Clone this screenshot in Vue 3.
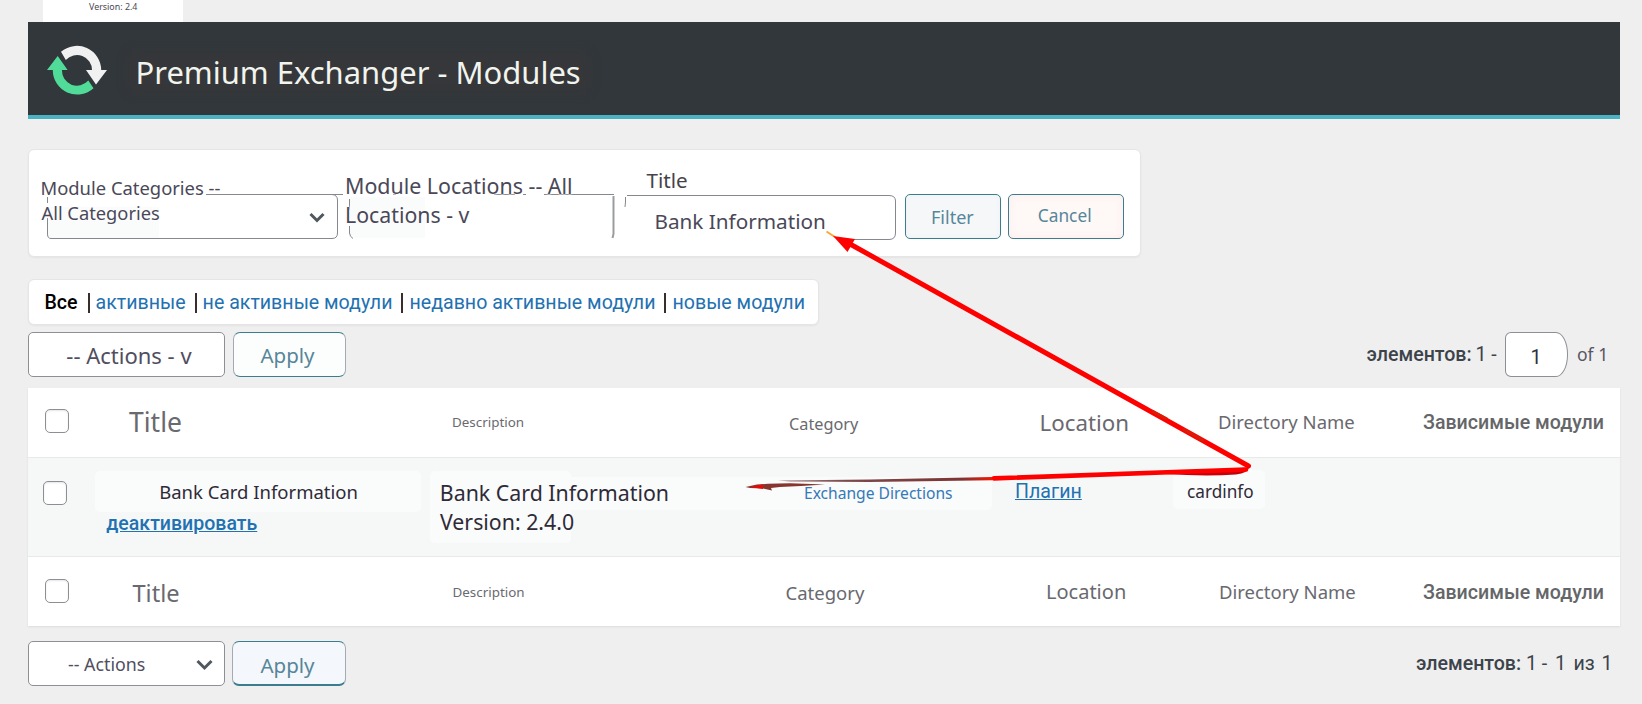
<script setup>
const filters = ['активные', 'не активные модули', 'недавно активные модули', 'новые модули']
const columns = [
  { key: 'title', label: 'Title' },
  { key: 'desc', label: 'Description' },
  { key: 'cat', label: 'Category' },
  { key: 'loc', label: 'Location' },
  { key: 'dir', label: 'Directory Name' },
  { key: 'dep', label: 'Зависимые модули' },
]
</script>

<template>
  <div class="page">
    <div class="version-chip"><span>Version: 2.4</span></div>

    <header class="banner">
      <svg class="logo" width="62" height="52" viewBox="0 0 62 52">
        <path fill="#f1f1f2" d="M14 6.8A24.3 24.3 0 0 1 54.2 25H60L49 39.5L39 25H45A15 15 0 0 0 18.8 15Z" />
        <path fill="#50dc98" d="M10.7 11L20.6 25H15A15 15 0 0 0 41.3 35.6L46.5 43.2A24.3 24.3 0 0 1 5.8 25H0Z" />
      </svg>
      <h1 class="t">Premium Exchanger - Modules</h1>
    </header>

    <form class="card filter" @submit.prevent>
      <div class="field f-cat">
        <svg class="frame" width="316" height="106" viewBox="0 0 316 106">
          <path class="tint" d="M19 57H130V88H22Q18 88 18 84Z" />
          <path d="M177 44.5H314M303 44.5Q308.500 45 308.500 50V83Q308.500 88.500 303 88.500H22Q18.500 88.500 18.500 84V68M18.500 47V53M60 44.500H63" />
          <path class="chev" d="M281.500 64L288 70.500L294.500 64" />
        </svg>
        <span class="t line1">Module Categories --</span>
        <span class="t line2">All Categories</span>
      </div>
      <div class="field f-loc">
        <svg class="frame" width="274" height="106" viewBox="0 0 274 106">
          <path class="tint" d="M5 47H80V88H8Q4 88 4 84Z" />
          <path d="M4.500 49V60M4.500 76V83Q5 87 8 88.500M48 44.500H51M149 44.500H170M178 44.500H181M199 44.500H269" />
          <path class="thick" d="M268.500 46V84L267.500 88" />
        </svg>
        <span class="t line1">Module Locations -- All</span>
        <span class="t line2">Locations - v</span>
      </div>
      <div class="field f-title">
        <svg class="frame" width="286" height="106" viewBox="0 0 286 106">
          <path d="M8 45.500H270Q276.500 45.500 276.500 51V83Q276.500 89.500 270 89.500H232M6.500 47V52L6 57" />
        </svg>
        <span class="t line1">Title</span>
        <span class="t line2">Bank Information</span>
      </div>
      <button class="btn b-filter"><span class="t">Filter</span></button>
      <button class="btn b-cancel"><span class="t">Cancel</span></button>
    </form>

    <nav class="card links">
      <b>Все</b>
      <template v-for="f in filters" :key="f"><i></i><a>{{ f }}</a></template>
    </nav>

    <div class="bar top">
      <div class="select"><span class="t">-- Actions - v</span></div>
      <button class="btn apply"><span class="t">Apply</span></button>
      <div class="pager">
        <b>элементов:</b><span class="from">1 -</span>
        <span class="num"><span>1</span></span>
        <span class="t of">of 1</span>
      </div>
    </div>

    <section class="table">
      <div class="row head">
        <div><span class="check"></span></div>
        <div v-for="c in columns" :key="c.key"><span class="t" :class="c.key">{{ c.label }}</span></div>
      </div>
      <div class="row data">
        <div><span class="check"></span></div>
        <div><em class="pad p1"></em><span class="t title">Bank Card Information</span><a class="t off">деактивировать</a></div>
        <div><em class="pad p2"></em><em class="pad p3"></em><span class="t desc">Bank Card Information</span><span class="t ver">Version: 2.4.0</span></div>
        <div><span class="t cat">Exchange Directions</span></div>
        <div><a class="t loc">Плагин</a></div>
        <div><em class="pad p4"></em><span class="t dir">cardinfo</span></div>
        <div></div>
      </div>
      <div class="row foot">
        <div><span class="check"></span></div>
        <div v-for="c in columns" :key="c.key"><span class="t" :class="c.key">{{ c.label }}</span></div>
      </div>
    </section>

    <div class="bar bottom">
      <div class="select">
        <span class="t">-- Actions</span>
        <svg class="arrow" width="18" height="12" viewBox="0 0 18 12"><path d="M1.500 2L8.500 9L15.500 2" /></svg>
      </div>
      <button class="btn apply"><span class="t">Apply</span></button>
      <div class="pager">
        <b>элементов:</b><span class="from">1 -</span><span class="n1">1</span><span class="n2">из</span><span class="n3">1</span>
      </div>
    </div>

    <svg class="callout" width="1642" height="704" viewBox="0 0 1642 704">
      <defs>
        <linearGradient id="fade" gradientUnits="userSpaceOnUse" x1="784" y1="0" x2="992" y2="0">
          <stop offset="0" stop-color="#a58588" /><stop offset=".3" stop-color="#7d4a4a" /><stop offset=".85" stop-color="#7d3433" /><stop offset="1" stop-color="#f01800" />
        </linearGradient>
      </defs>
      <path d="M826.500 231.500L835 237" stroke="#ffa630" stroke-width="2" />
      <path d="M850 244L1248.500 466" stroke="#fe0000" stroke-width="5" stroke-linecap="round" />
      <path d="M833 236L855 239L847.500 252Z" fill="#fe0000" />
      <path d="M1152 411L1167 419M1183 429L1204 441" stroke="#d81d08" stroke-width="3" />
      <path d="M1165 472L1249 467.500Q1248 473 1236 474.500Q1205 476.500 1165 474Z" fill="#c90009" />
      <path d="M994 478.400L1246 469.500" stroke="#fe0000" stroke-width="4.600" stroke-linecap="round" />
      <path d="M778 480.500L870 479.500L992 477V480.200L870 482L790 481.500Z" fill="url(#fade)" />
      <path d="M745.500 487L757 484.500L768 483.800L790 483.300L825 484.500L801 486L780 487L771 488L772 490.500L763 488.500L750 488Z" fill="#86352f" />
      <path d="M750 487L763 484.500V489Z" fill="#ed0905" />
    </svg>
  </div>
</template>

<style>
body { background: #efefef; overflow: hidden; }
</style>

<style scoped>
* { box-sizing: border-box; }
.page { position: relative; width: 1642px; height: 704px; padding-left: 28px; background: #efefef; overflow: hidden; font-family: Roboto, "Noto Sans", sans-serif; font-size: 19.6px; color: #3c434a; }
.t { --r: .388; display: block; width: max-content; font-family: "Noto Sans", sans-serif; font-size: var(--f); font-weight: 400; line-height: 24px; white-space: nowrap; margin: calc(var(--b) - 12px - var(--f) * var(--r)) 0 0 var(--x); }

.version-chip { width: 140px; height: 22px; margin-left: 15px; background: #fff; font: 8.9px/14px "Noto Sans", sans-serif; color: #4a4850; padding-left: 46px; overflow: hidden; }
.banner { width: 1592px; height: 97px; background: #32373b; border-bottom: 4px solid #4bb2c1; display: flex; }
.logo { margin: 23px 0 0 19px; flex: none; }
.banner .t { --f: 30.950px; --b: 62px; --x: 26.500px; color: #f2f4ee; background: #36373a; box-shadow: 0 0 8px 8px #36373a; height: 24px; }

.card { background: #fff; border: 1px solid #e5e5e5; border-radius: 6px; box-shadow: 0 1px 2px rgba(0, 0, 0, .05); }
.filter { width: 1113px; height: 108px; margin-top: 30px; display: flex; }
.field { position: relative; height: 106px; flex: none; color: #4a4858; display: grid; grid-template-rows: 53px 53px; }
.field .t { position: relative; }
.f-cat { width: 316px; }
.f-loc { width: 274px; }
.f-title { width: 286px; }
.frame { position: absolute; left: 0; top: 0; fill: none; stroke: #85888f; stroke-width: 1; }
.frame .tint { fill: #fafbfb; stroke: none; }
.frame .thick { stroke: #9a9da0; stroke-width: 2; }
.frame .chev { stroke: #50575e; stroke-width: 3; }
.f-cat .t, .f-loc .t { text-shadow: 0 0 2px #fff, 0 0 2px #fff, 0 0 3px #fff; }
.f-cat .line1 { --f: 18.400px; --b: 45px; --x: 11.500px; }
.f-cat .line2 { --f: 18.300px; --b: 17px; --x: 12.500px; }
.f-loc .line1 { --f: 21.400px; --b: 44px; --x: 0px; }
.f-loc .line2 { --f: 21.300px; --b: 20px; --x: 0px; }
.f-title .line1 { --f: 20.600px; --b: 38px; --x: 27.500px; color: #45434a; }
.f-title .line2 { --f: 20.700px; --b: 26px; --x: 35.500px; }

.btn { border: 1px solid #3b7d8e; border-radius: 5px; padding: 0; height: 45px; display: flex; align-items: flex-start; color: #568699; background: #f6f9fb; }
.filter .btn { margin-top: 44px; }
.b-filter { width: 96px; background: #f5f7f9; box-shadow: inset 0 0 5px #eef2f4; }
.b-filter .t { --f: 18px; --b: 29px; --x: 25px; }
.b-cancel { width: 116px; margin-left: 7px; background: #fef8f7; box-shadow: inset 0 0 8px #fdeceb; }
.b-cancel .t { --f: 17.300px; --b: 28px; --x: 28.800px; }

.links { width: 791px; height: 46px; margin-top: 22px; padding-left: 15.500px; display: flex; align-items: flex-start; line-height: 24px; padding-top: 11px; white-space: nowrap; }
.links b { color: #000; font-weight: 500; width: 34px; }
.links a { color: #2271b1; }
.links i { width: 2px; height: 20px; background: #3b2d2a; margin: 2px 6px 0 9px; flex: none; }

.bar { width: 1592px; height: 45px; display: flex; }
.top { margin-top: 7px; }
.bottom { margin-top: 15px; }
.select { position: relative; width: 197px; height: 45px; border: 1px solid #8c8f94; border-radius: 5px; background: #fff; color: #514e60; flex: none; display: flex; align-items: flex-start; }
.top .select .t { --f: 22px; --b: 31px; --x: 37.300px; }
.bottom .select .t { --f: 17.800px; --b: 29px; --x: 39px; }
.arrow { margin: 17px 0 0 auto; margin-right: 10px; fill: none; stroke: #50575e; stroke-width: 3; }
.apply { width: 112px; margin-left: 8px; border-color: #3b7d8e #a4a9b8; border-radius: 7px; }
.top .apply { width: 113px; background: #fcfefe; }
.apply .t { --f: 20.500px; --b: 30px; --x: 26.500px; }
.bottom .apply { width: 114px; margin-left: 7px; background: #f4f7fb; border-bottom-width: 2px; }
.bottom .apply .t { --b: 31px; --x: 27.500px; }
.pager { margin-left: auto; display: flex; align-items: flex-start; line-height: 24px; white-space: nowrap; }
.pager > * { flex: none; }
.pager b { font-weight: 500; width: 106px; margin-top: 11px; }
.from { margin-top: 11px; width: 32px; padding-left: 3px; }
.num { width: 63px; height: 45px; border: 1px solid #8c8f94; border-radius: 6px 12px 12px 6px / 6px 22px 22px 6px; background: #fff; color: #2c3338; }
.num span { display: block; margin: 13px 0 0 25px; }
.top .pager { width: 253.500px; }
.of { --f: 17.500px; --b: 29px; --x: 9.500px; color: #595664; }
.bottom .pager { width: 204px; }
.bottom .pager > * { margin-top: 11px; }
.bottom .from { width: 32px; padding-left: 4px; }
.n1 { width: 19.500px; padding-left: 1px; }
.n2 { width: 28px; }
.n3 { width: 12px; }

.table { width: 1592px; height: 238px; margin-top: 11px; background: #fff; box-shadow: 0 1px 2px rgba(0, 0, 0, .08); color: #69696f; }
.row { display: grid; grid-template-columns: 67px 335px 335px 250px 170px 223px 212px; }
.row > div { position: relative; }
.head { height: 70px; border-bottom: 1px solid #e8eaea; }
.data { height: 99px; background: #f6f8f8; border-bottom: 1px solid #e8eaea; }
.foot { height: 69px; }
.check { display: block; width: 24px; height: 24px; margin: 21px 0 0 17px; border: 1px solid #8c8f94; border-radius: 5px; background: #fff; box-shadow: inset 0 1px 2px rgba(0, 0, 0, .1); }
.data .check { margin: 23px 0 0 15px; }
.foot .check { margin-top: 22px; }
.head .title { --f: 26.500px; --b: 44.500px; --x: 34px; }
.foot .title { --f: 23.600px; --b: 45px; --x: 37.500px; }
.head .desc, .foot .desc { --f: 13.400px; --b: 39.500px; --x: 22px; }
.foot .desc { --b: 40px; --x: 22.500px; }
.head .cat { --f: 16.300px; --b: 42px; --x: 24px; }
.foot .cat { --f: 18.500px; --b: 43.500px; --x: 20.500px; }
.head .loc { --f: 22.300px; --b: 44px; --x: 24.500px; }
.foot .loc { --f: 20px; --b: 42.500px; --x: 31px; }
.head .dir { --f: 18.500px; --b: 41.500px; --x: 33px; }
.foot .dir { --f: 18.500px; --b: 42.500px; --x: 34px; }
.head .dep, .foot .dep { --r: .342; --f: 19.600px; --b: 42px; --x: 15px; font-family: Roboto, sans-serif; font-weight: 500; color: #646668; }
.foot .dep { --b: 43px; }
.data .t { position: relative; color: #2f2a38; }
.data .title { --f: 18.500px; --b: 41px; --x: 64.200px; }
.data .off { --r: .342; --f: 19.550px; --b: 27px; --x: 11.300px; font-family: Roboto, sans-serif; font-weight: 500; color: #2271b1; text-decoration: underline; }
.data .desc { --f: 21.350px; --b: 43px; --x: 9.800px; }
.data .ver { --f: 21.300px; --b: 25.500px; --x: 10px; }
.data .cat { --f: 15.600px; --b: 41px; --x: 39px; color: #3579b8; }
.data .loc { --r: .342; --f: 19.600px; --b: 41px; --x: 0px; font-family: Roboto, sans-serif; color: #2271b1; text-decoration: underline; }
.data .dir { --f: 17.200px; --b: 41px; --x: 2px; }
.pad { position: absolute; background: #fafbfb; border-radius: 5px; }
.p1 { left: 0; top: 13px; width: 326px; height: 41px; }
.p2 { left: 0; top: 13px; width: 141px; height: 72px; }
.p3 { left: 20px; top: 19px; width: 542px; height: 33px; }
.p4 { left: -12px; top: 12px; width: 92px; height: 39px; }

.callout { position: absolute; left: 0; top: 0; fill: none; pointer-events: none; }
</style>
